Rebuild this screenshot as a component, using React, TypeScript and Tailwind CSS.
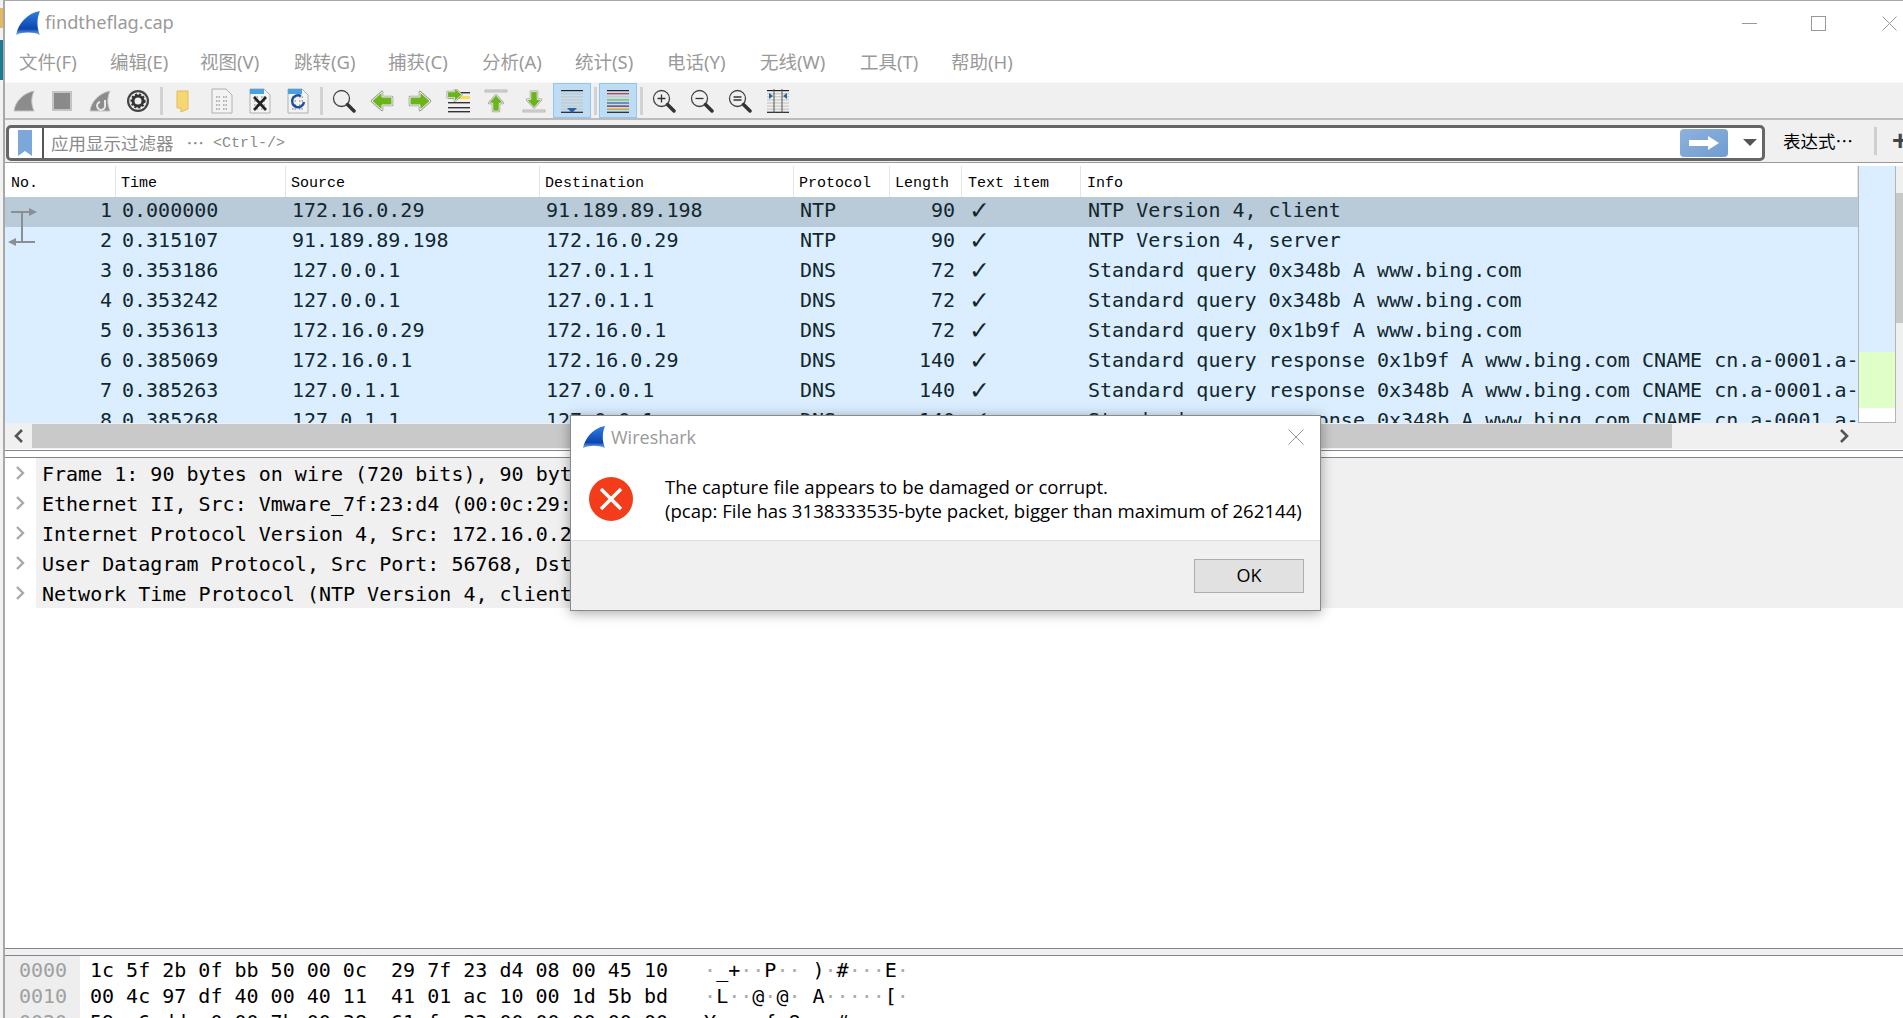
const mono = "font-['DejaVu_Sans_Mono',monospace]";

const rows = [
  ["1", "0.000000", "172.16.0.29", "91.189.89.198", "NTP", "90", "NTP Version 4, client"],
  ["2", "0.315107", "91.189.89.198", "172.16.0.29", "NTP", "90", "NTP Version 4, server"],
  ["3", "0.353186", "127.0.0.1", "127.0.1.1", "DNS", "72", "Standard query 0x348b A www.bing.com"],
  ["4", "0.353242", "127.0.0.1", "127.0.1.1", "DNS", "72", "Standard query 0x348b A www.bing.com"],
  ["5", "0.353613", "172.16.0.29", "172.16.0.1", "DNS", "72", "Standard query 0x1b9f A www.bing.com"],
  ["6", "0.385069", "172.16.0.1", "172.16.0.29", "DNS", "140", "Standard query response 0x1b9f A www.bing.com CNAME cn.a-0001.a-msedge.net"],
  ["7", "0.385263", "127.0.1.1", "127.0.0.1", "DNS", "140", "Standard query response 0x348b A www.bing.com CNAME cn.a-0001.a-msedge.net"],
  ["8", "0.385268", "127.0.1.1", "127.0.0.1", "DNS", "140", "Standard query response 0x348b A www.bing.com CNAME cn.a-0001.a-msedge.net"],
];

const details = [
  "Frame 1: 90 bytes on wire (720 bits), 90 bytes captured (720 bits)",
  "Ethernet II, Src: Vmware_7f:23:d4 (00:0c:29:7f:23:d4), Dst: 1c:5f:2b:0f:bb:50",
  "Internet Protocol Version 4, Src: 172.16.0.29, Dst: 91.189.89.198",
  "User Datagram Protocol, Src Port: 56768, Dst Port: 123",
  "Network Time Protocol (NTP Version 4, client)",
];

const menus = [
  ["文件(F)", "w-[91px]"], ["编辑(E)", "w-[90px]"], ["视图(V)", "w-[94px]"], ["跳转(G)", "w-[94px]"],
  ["捕获(C)", "w-[94px]"], ["分析(A)", "w-[93px]"], ["统计(S)", "w-[92px]"], ["电话(Y)", "w-[93px]"],
  ["无线(W)", "w-[100px]"], ["工具(T)", "w-[91px]"], ["帮助(H)", "w-[90px]"],
];

const columns = "grid grid-cols-[111px_170px_254px_254px_96px_72px_119px_777px]";

function Shark({ className = "" }: { className?: string }) {
  return (
    <svg viewBox="0 0 24 24" className={className}>
      <defs>
        <linearGradient id="fin" x1="0" y1="0" x2="0" y2="1">
          <stop offset="0" stopColor="#2f7fe0" />
          <stop offset="0.75" stopColor="#0b45b0" />
          <stop offset="1" stopColor="#7fb2e6" />
        </linearGradient>
      </defs>
      <path d="M1 23 C3 13 11 3 23 1 C20 8 20 16 23 23 C16 20 8 20 1 23 Z" fill="url(#fin)" />
    </svg>
  );
}

function GrayFin({ reload = false }: { reload?: boolean }) {
  return (
    <svg viewBox="0 0 24 24" className="w-[24px] h-[24px]">
      <path d="M2 22 C3 13 11 4 22 2 C19 9 19 15 22 22 Z" fill="#8c8c8c" stroke="#c4c4c4" strokeWidth="1" />
      {reload && <path d="M17 11 v5 a4 4 0 1 1 -5 -3" fill="none" stroke="#e8e8e8" strokeWidth="2" />}
    </svg>
  );
}

function Arrow({ dir }: { dir: "left" | "right" | "up" | "down" }) {
  const rot = { right: 0, down: 90, left: 180, up: 270 }[dir];
  const d = "M2 8 H12 V3 L22 12 L12 21 V16 H2 Z";
  return (
    <g transform={`rotate(${rot} 12 12)`}>
      <path d={d} fill="none" stroke="#9c9c9c" strokeWidth="2.6" strokeLinejoin="round" />
      <path d={d} fill="#6bb51a" stroke="#f4f4f4" strokeWidth="1" strokeLinejoin="round" />
    </g>
  );
}

function Magnifier({ mark }: { mark?: "+" | "-" | "=" }) {
  return (
    <svg viewBox="0 0 24 24" className="w-[24px] h-[24px]">
      <circle cx="9.5" cy="9.5" r="8" fill="none" stroke="#444" strokeWidth="1.3" />
      <path d="M15.5 15.5 L22 22" stroke="#333" strokeWidth="3.5" strokeLinecap="round" />
      {mark === "+" && <path d="M5.5 9.5 H13.5 M9.5 5.5 V13.5" stroke="#333" strokeWidth="1.3" />}
      {mark === "-" && <path d="M5.5 9.5 H13.5" stroke="#333" strokeWidth="1.3" />}
      {mark === "=" && <path d="M5.5 8 H13.5 M5.5 11 H13.5" stroke="#333" strokeWidth="1.3" />}
    </svg>
  );
}

function DocIcon({ children }: { children?: React.ReactNode }) {
  return (
    <svg viewBox="0 0 22 26" className="w-[22px] h-[26px]">
      <path d="M1 1 H15 L21 7 V25 H1 Z" fill="#f3f3f3" stroke="#b0b0b0" />
      <path d="M5 9 H9 M12 9 H17 M5 13 H9 M12 13 H17 M5 17 H9 M12 17 H17 M5 21 H9 M12 21 H17" stroke="#b5b5b5" strokeWidth="2" strokeDasharray="1.5 1" />
      {children}
    </svg>
  );
}

function Lines({ colors, children }: { colors: string[]; children?: React.ReactNode }) {
  return (
    <svg viewBox="0 0 24 24" className="w-[24px] h-[24px]">
      {colors.map((c, i) => <rect key={i} x="1" y={1 + i * 3.1} width="22" height="1.2" fill={c} />)}
      {children}
    </svg>
  );
}

function Sep() {
  return <div className="w-[3px] h-[28px] bg-[#d2d2d2] ml-[3px] mr-[2px]" />;
}

function Tool({ children, active = false }: { children: React.ReactNode; active?: boolean }) {
  return (
    <div className={`w-[38px] h-[35px] flex items-center justify-center ${active ? "bg-[#bfdcf5] border border-[#92c5ef]" : ""}`}>
      {children}
    </div>
  );
}

function Toolbar() {
  const gray = "#c8c8c0";
  return (
    <div className="h-[36px] bg-[#f0f0f0] flex items-center border-t border-t-[#f8f8f8]">
      <Tool><GrayFin /></Tool>
      <Tool><div className="w-[20px] h-[20px] bg-[#8a8a8a] border-2 border-[#c4c4c4]" /></Tool>
      <Tool><GrayFin reload /></Tool>
      <Tool>
        <svg viewBox="0 0 24 24" className="w-[24px] h-[24px]">
          <circle cx="12" cy="12" r="11" fill="#444" />
          <circle cx="12" cy="12" r="8.8" fill="#eee" />
          <circle cx="12" cy="12" r="5" fill="none" stroke="#333" strokeWidth="3" />
          <circle cx="12" cy="12" r="6.6" fill="none" stroke="#333" strokeWidth="2" strokeDasharray="2 2" />
        </svg>
      </Tool>
      <Sep />
      <Tool>
        <svg viewBox="0 0 16 24" className="w-[16px] h-[24px]">
          <path d="M1 2 L12 2 V20 L5 23 V19 H1 Z" fill="#f7d774" stroke="#e3bb52" />
        </svg>
      </Tool>
      <Tool><DocIcon /></Tool>
      <Tool>
        <DocIcon>
          <path d="M1 1 H15 V6 H1 Z" fill="#4aa0e0" />
          <path d="M5 9 L17 22 M17 9 L5 22" stroke="#222" strokeWidth="2.6" />
        </DocIcon>
      </Tool>
      <Tool>
        <DocIcon>
          <path d="M1 1 H15 V6 H1 Z" fill="#4aa0e0" />
          <path d="M14 8 A6 6 0 1 0 17 14" fill="none" stroke="#1c4f9c" strokeWidth="2.4" />
        </DocIcon>
      </Tool>
      <Sep />
      <Tool><Magnifier /></Tool>
      <Tool><svg viewBox="0 0 24 24" className="w-[24px] h-[24px]"><Arrow dir="left" /></svg></Tool>
      <Tool><svg viewBox="0 0 24 24" className="w-[24px] h-[24px]"><Arrow dir="right" /></svg></Tool>
      <Tool>
        <svg viewBox="0 0 24 24" className="w-[24px] h-[24px]">
          {[3, 8, 13, 18, 22].map((y) => <rect key={y} x="2" y={y} width="22" height="1.4" fill="#333" />)}
          <rect x="14" y="7" width="10" height="3" fill="#f5e050" />
          <g transform="translate(0 -3) scale(0.72)"><Arrow dir="right" /></g>
        </svg>
      </Tool>
      <Tool>
        <svg viewBox="0 0 24 24" className="w-[24px] h-[24px]">
          <rect x="1" y="1" width="22" height="2" fill="#ddd" stroke="#999" strokeWidth="0.6" />
          <g transform="translate(2.4 4.5) scale(0.8)"><Arrow dir="up" /></g>
        </svg>
      </Tool>
      <Tool>
        <svg viewBox="0 0 24 24" className="w-[24px] h-[24px]">
          <rect x="1" y="21" width="22" height="2" fill="#ddd" stroke="#999" strokeWidth="0.6" />
          <g transform="translate(2.4 1) scale(0.8)"><Arrow dir="down" /></g>
        </svg>
      </Tool>
      <Tool active>
        <Lines colors={["#222", gray, gray, gray, gray, gray, gray, "#222"]}>
          <path d="M7 19 H17 L12 24 Z" fill="#2f5fa8" />
        </Lines>
      </Tool>
      <div className="w-[8px] flex justify-center"><div className="w-[3px] h-[28px] bg-[#d2d2d2]" /></div>
      <Tool active>
        <Lines colors={["#222", "#c83030", "#c8c8c0", "#70b830", "#2f5fa8", "#702020", "#d0a000", "#222"]} />
      </Tool>
      <Sep />
      <Tool><Magnifier mark="+" /></Tool>
      <Tool><Magnifier mark="-" /></Tool>
      <Tool><Magnifier mark="=" /></Tool>
      <Tool>
        <Lines colors={["#222", gray, gray, gray, gray, gray, gray, "#222"]}>
          <path d="M8 0 V24 M16 0 V24" stroke="#555" strokeWidth="1" />
          <path d="M3 4 L7 7 L3 10 Z M21 4 L17 7 L21 10 Z" fill="#2f5fa8" />
        </Lines>
      </Tool>
    </div>
  );
}

function FilterBar() {
  return (
    <div className="h-[44px] bg-[#f0f0f0] flex items-center pl-[1px] border-t-2 border-t-[#bcbcbc] whitespace-nowrap">
      <div className="w-[1759px] shrink-0 h-[36px] bg-white border-[3px] border-[#666] rounded-[5px] flex items-center mt-[3px]">
        <div className="w-[33px] pr-[2px] flex justify-center">
          <svg viewBox="0 0 16 28" className="w-[16px] h-[28px]">
            <path d="M1 1 H15 V27 L8 22 L1 27 Z" fill="#7ba7d9" />
          </svg>
        </div>
        <div className="w-[2px] h-[30px] bg-[#555]" />
        <div className="flex items-center ml-[7px] mt-[1px] text-[#8a8a8a]">
          <span className="text-[17.5px] font-['Noto_Sans_CJK_SC',sans-serif]">应用显示过滤器</span>
          <span className="text-[17.5px] ml-[13px] font-['Noto_Sans_CJK_SC',sans-serif]">…</span>
          <span className="text-[15px] ml-[9px] mt-[3px] font-['Liberation_Mono',monospace]">&lt;Ctrl-/&gt;</span>
        </div>
        <div className="flex-1" />
        <div className="w-[48px] h-[28px] rounded-[4px] bg-linear-to-br from-[#8fb2dc] to-[#6e9dd0] flex items-center justify-center">
          <svg viewBox="0 0 32 16" className="w-[32px] h-[16px]">
            <path d="M1 5 H20 V1 L31 8 L20 15 V11 H1 Z" fill="#fff" strokeLinejoin="round" />
          </svg>
        </div>
        <div className="w-[34px] flex justify-end pr-[5px]">
          <div className="w-0 h-0 border-l-[7px] border-r-[7px] border-t-[7px] border-l-transparent border-r-transparent border-t-[#555]" />
        </div>
      </div>
      <span className="ml-[18px] w-[71px] shrink-0 text-[17.5px] text-black font-['Noto_Sans_CJK_SC',sans-serif] mt-[1px]">表达式…</span>
      <div className="w-[3px] h-[28px] bg-[#cfcfcf] ml-[20px] shrink-0" />
      <span className="ml-[15px] text-[28px] leading-none font-bold text-[#444] font-['Liberation_Sans',sans-serif]">+</span>
    </div>
  );
}

function PacketRow({ row, index }: { row: string[]; index: number }) {
  const bg = index === 0 ? "bg-[#b9cad9]" : "bg-[#daeeff]";
  return (
    <div className={`${columns} h-[30px] leading-[27px] text-[20px] text-[#12272e] whitespace-nowrap overflow-hidden ${mono} ${bg}`}>
      <div className="text-right pr-[4px]">{row[0]}</div>
      <div className="pl-[6px]">{row[1]}</div>
      <div className="pl-[6px]">{row[2]}</div>
      <div className="pl-[6px]">{row[3]}</div>
      <div className="pl-[6px]">{row[4]}</div>
      <div className="text-right pr-[7px]">{row[5]}</div>
      <div className="pl-[7px] text-[25px] font-['DejaVu_Sans',sans-serif] font-bold">✓</div>
      <div className="pl-[7px] overflow-hidden">{row[6]}</div>
    </div>
  );
}

function PacketList() {
  const headers = ["No.", "Time", "Source", "Destination", "Protocol", "Length", "Text item", "Info"];
  return (
    <div className="h-[257px] flex overflow-hidden">
      <div className="w-[1853px] relative overflow-hidden">
        <div className={`${columns} h-[31px] overflow-hidden bg-white text-[15px] leading-[36px] text-black font-['Liberation_Mono',monospace]`}>
          {headers.map((h, i) => (
            <div key={h} className={`border-r border-r-[#e4e4e4] ${i === 0 ? "pl-[6px]" : i > 5 ? "pl-[6px]" : "pl-[5px]"}`}>{h}</div>
          ))}
        </div>
        {rows.map((r, i) => <PacketRow key={r[0]} row={r} index={i} />)}
        <svg viewBox="0 0 30 40" className="absolute left-[2px] top-[41px] w-[30px] h-[40px]">
          <path d="M4 5 H24 M15 5 V35 M6 35 H28" stroke="#8a8f93" strokeWidth="2" fill="none" />
          <path d="M22 1 L30 5 L22 9 Z M9 31 L1 35 L9 39 Z" fill="#8a8f93" />
        </svg>
      </div>
      <div className="w-[38px] flex flex-col border-x border-[#b5b5b5] border-b border-b-[#b5b5b5]">
        <div className="h-[186px] bg-[#daeeff]" />
        <div className="h-[56px] bg-[#e0ffc8]" />
        <div className="flex-1 bg-white" />
      </div>
      <div className="w-[7px] flex flex-col bg-[#f0f0f0]">
        <div className="h-[27px]" />
        <div className="h-[130px] bg-[#c8c8c8]" />
      </div>
    </div>
  );
}

function HScroll() {
  return (
    <div className="h-[26px] bg-[#f0f0f0] flex items-center">
      <div className="w-[27px] flex justify-center">
        <svg viewBox="0 0 10 14" className="w-[10px] h-[14px]"><path d="M8 1 L2 7 L8 13" fill="none" stroke="#555" strokeWidth="2.6" /></svg>
      </div>
      <div className="w-[1640px] h-[24px] bg-[#c9c9c9]" />
      <div className="w-[177px] flex justify-end">
        <svg viewBox="0 0 10 14" className="w-[10px] h-[14px]"><path d="M2 1 L8 7 L2 13" fill="none" stroke="#555" strokeWidth="2.6" /></svg>
      </div>
    </div>
  );
}

function DetailsPane() {
  return (
    <div className="h-[491px] bg-white border-t border-t-[#80848c]">
      {details.map((d) => (
        <div key={d} className={`h-[30px] flex bg-[#f0f0f0] text-[20px] leading-[32px] text-black whitespace-pre overflow-hidden ${mono}`}>
          <div className="w-[31px] bg-white flex items-center justify-center shrink-0 pr-[2px]">
            <svg viewBox="0 0 10 14" className="w-[10px] h-[14px]"><path d="M2 1 L8 7 L2 13" fill="none" stroke="#a8a8a8" strokeWidth="2.4" /></svg>
          </div>
          <span className="pl-[6px]">{d}</span>
        </div>
      ))}
    </div>
  );
}

const hexRows: [string, string, string, string][] = [
  ["0000", "1c 5f 2b 0f bb 50 00 0c  29 7f 23 d4 08 00 45 10", "·_+··P··", ")·#···E·"],
  ["0010", "00 4c 97 df 40 00 40 11  41 01 ac 10 00 1d 5b bd", "·L··@·@·", "A·····[·"],
  ["0020", "59 c6 dd c0 00 7b 00 38  61 fc 23 00 00 00 00 00", "Y····{·8", "a·#·····"],
];

function Ascii({ text }: { text: string }) {
  return (
    <>
      {text.split("").map((c, i) => (
        <span key={i} className={c === "·" ? "text-[#aaa]" : "text-black"}>{c}</span>
      ))}
    </>
  );
}

function HexPane() {
  return (
    <div className="flex-1 border-t border-t-[#80848c] flex overflow-hidden">
      <div className={`w-[75px] bg-[#eeeeee] pl-[14px] pt-[1px] text-[20px] leading-[26px] text-[#a0a0a0] ${mono}`}>
        {hexRows.map((r) => <div key={r[0]}>{r[0]}</div>)}
      </div>
      <div className={`pl-[10px] pt-[1px] text-[20px] leading-[26px] text-black whitespace-pre ${mono}`}>
        {hexRows.map((r) => (
          <div key={r[0]}>
            {r[1]}{"   "}<Ascii text={r[2]} /> <Ascii text={r[3]} />
          </div>
        ))}
      </div>
    </div>
  );
}

function ErrorDialog() {
  return (
    <div className="absolute left-[570px] top-[415px] w-[751px] h-[196px] bg-white border border-[#8a8a8a] shadow-[0_2px_12px_rgba(0,0,0,0.35)] flex flex-col font-['Open_Sans',sans-serif]">
      <div className="h-[42px] flex items-center pl-[11px] pr-[16px]">
        <Shark className="w-[24px] h-[24px]" />
        <span className="ml-[5px] text-[18px] text-[#9a9a9a]">Wireshark</span>
        <div className="flex-1" />
        <svg viewBox="0 0 16 16" className="w-[16px] h-[16px]"><path d="M0.5 0.5 L15.5 15.5 M15.5 0.5 L0.5 15.5" stroke="#999" strokeWidth="1" /></svg>
      </div>
      <div className="h-[82px] flex items-center pl-[18px]">
        <svg viewBox="0 0 44 44" className="w-[44px] h-[44px]">
          <circle cx="22" cy="22" r="22" fill="#f23c1a" />
          <path d="M12 12 L32 32 M32 12 L12 32" stroke="#fff" strokeWidth="3.5" />
        </svg>
        <div className="ml-[32px] text-[18.6px] leading-[24px] text-black whitespace-nowrap">
          <div>The capture file appears to be damaged or corrupt.</div>
          <div>(pcap: File has 3138333535-byte packet, bigger than maximum of 262144)</div>
        </div>
      </div>
      <div className="flex-1 bg-[#f0f0f0] border-t border-t-[#dfdfdf] flex items-center justify-end pr-[16px]">
        <div className="w-[110px] h-[34px] bg-[#e1e1e1] border border-[#adadad] flex items-center justify-center text-[18px] text-black">OK</div>
      </div>
    </div>
  );
}

export default function App() {
  return (
    <div className="w-[1903px] h-[1018px] relative overflow-hidden bg-white flex font-['Noto_Sans','Noto_Sans_CJK_SC',sans-serif]">
      <div className="w-[3px] flex flex-col bg-[#f2f2f2]">
        <div className="h-[8px]" />
        <div className="h-[20px] bg-[#e8b860]" />
        <div className="h-[12px]" />
        <div className="h-[40px] bg-[#1b7c94]" />
      </div>
      <div className="w-[1900px] flex flex-col border-l-2 border-l-[#a8a8a8] border-t border-t-[#a8a8a8]">
        <div className="h-[44px] flex items-center pl-[10px]">
          <Shark className="w-[26px] h-[26px]" />
          <span className="ml-[4px] text-[18.2px] text-[#9a9a9a]">findtheflag.cap</span>
          <div className="flex-1" />
          <div className="w-[15px] h-[1px] bg-[#999]" />
          <div className="w-[15px] h-[15px] border border-[#999] ml-[54px]" />
          <svg viewBox="0 0 15 15" className="w-[15px] h-[15px] ml-[56px] mr-[6px]"><path d="M0.5 0.5 L14.5 14.5 M14.5 0.5 L0.5 14.5" stroke="#999" strokeWidth="1" /></svg>
        </div>
        <div className="h-[37px] pb-[4px] flex items-center pl-[14px] text-[18.5px] text-[#9a9a9a] whitespace-nowrap">
          {menus.map(([m, w]) => <span key={m} className={w}>{m}</span>)}
        </div>
        <Toolbar />
        <FilterBar />
        <div className="h-[4px] border-t border-t-[#9a9a9a] bg-white" />
        <PacketList />
        <HScroll />
        <div className="h-[7px] bg-white border-t border-t-[#80848c] mt-[1px]" />
        <DetailsPane />
        <div className="h-[7px] bg-[#f0f0f0] border-t border-t-[#80848c]" />
        <HexPane />
      </div>
      <ErrorDialog />
    </div>
  );
}
